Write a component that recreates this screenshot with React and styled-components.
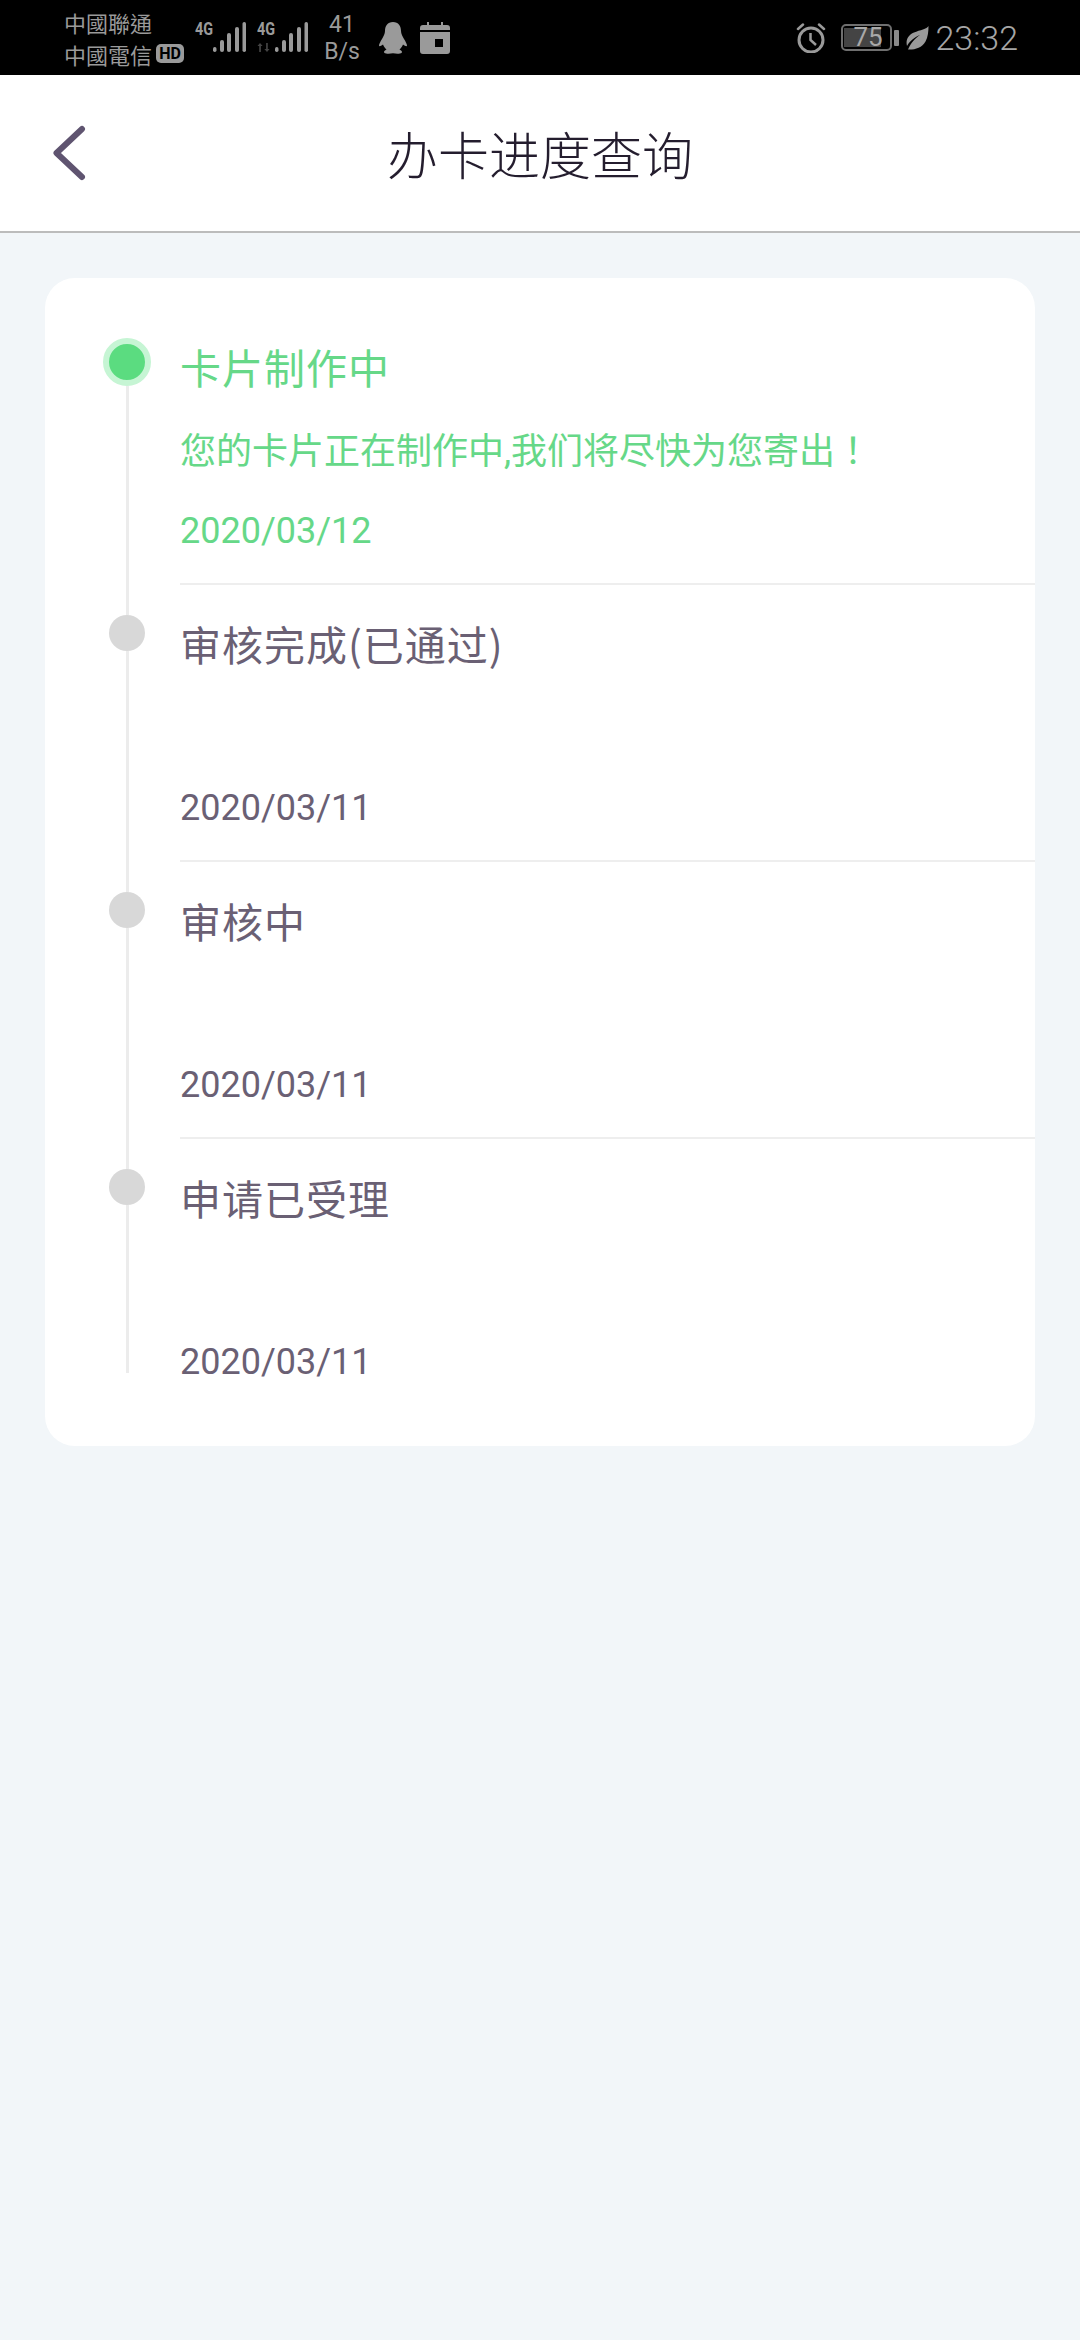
import styled, { createGlobalStyle } from 'styled-components';

const GlobalStyle = createGlobalStyle`
  * {
    box-sizing: border-box;
  }
  html,
  body {
    margin: 0;
    padding: 0;
    background: #f2f6f9;
  }
  body {
    font-family: Roboto, 'Noto Sans CJK SC', sans-serif;
  }
`;

const Page = styled.div`
  width: 1080px;
  height: 2340px;
  background: #f2f6f9;
  overflow: hidden;
`;

const StatusBar = styled.div`
  height: 75px;
  background: #000;
  color: #9a9a9a;
  display: flex;
  align-items: center;
  justify-content: space-between;
  padding: 0 62px 0 64px;
`;

const StatusGroup = styled.div`
  display: flex;
  align-items: center;
`;

const Carriers = styled.div`
  width: 131px;
  display: flex;
  flex-direction: column;
  font-family: 'Noto Sans CJK TC', sans-serif;
  font-size: 22px;
  line-height: 32px;
`;

const CarrierLine = styled.div`
  display: flex;
  align-items: center;
  white-space: nowrap;
`;

const HdBadge = styled.span`
  margin-left: 4px;
  width: 28px;
  height: 19px;
  border-radius: 5px;
  background: #9a9a9a;
  color: #000;
  font: 700 16px/19px Roboto, sans-serif;
  text-align: center;
`;

const Signals = styled.div`
  display: flex;
  gap: 10px;
`;

const Speed = styled.div`
  width: 36px;
  margin-left: 15px;
  font-size: 23px;
  line-height: 27px;
  text-align: center;
`;

const AppIcons = styled.div`
  display: flex;
  gap: 13px;
  margin-left: 19px;
`;

const Battery = styled.div`
  width: 51px;
  height: 27px;
  margin-left: 15px;
  padding: 2px 1px;
  border: 2px solid #6f6f6f;
  border-radius: 5px;
  display: flex;
`;

const BatteryLevel = styled.div`
  flex: 1;
  background: linear-gradient(#444, #444) no-repeat left / ${({ $fill }) => $fill}px 100%;
  color: #a8a8a8;
  font-size: 26px;
  line-height: 19px;
  padding-left: 9px;
`;

const BatteryCap = styled.div`
  width: 5px;
  height: 16px;
  margin-left: 2px;
  border-radius: 1px;
  background: #8a8a8a;
`;

const LeafSlot = styled.div`
  margin-left: 7px;
`;

const Clock = styled.div`
  margin-left: 6px;
  font-size: 34px;
  font-weight: 300;
  line-height: 40px;
  color: #a6a6a6;
`;

const Header = styled.div`
  height: 158px;
  background: #fff;
  border-bottom: 2px solid #bcbcbc;
  display: grid;
  grid-template-columns: 1fr auto 1fr;
  align-items: center;
  padding-left: 50px;
`;

const BackButton = styled.div`
  width: 36px;
  height: 60px;
`;

const Title = styled.div`
  margin-left: -50px;
  font-family: 'Noto Sans CJK SC', sans-serif;
  font-size: 51px;
  font-weight: 300;
  line-height: 60px;
  color: #241d2e;
`;

const Card = styled.div`
  margin: 45px 45px 0;
  height: 1168px;
  padding: 30px 0 31px 58px;
  background: #fff;
  border-radius: 30px;
`;

const Row = styled.div`
  height: 277px;
  display: flex;
  color: ${({ $active }) => ($active ? '#66d888' : '#6a6074')};
`;

const Marker = styled.div`
  width: 48px;
  display: flex;
  flex-direction: column;
  align-items: center;
  padding-bottom: ${({ $last }) => ($last ? '43px' : '0')};
`;

const RailTop = styled.div`
  width: 3px;
  height: 30px;
  margin-left: 1px;
  background: ${({ $active }) => ($active ? 'transparent' : '#ececec')};
`;

const Rail = styled.div`
  width: 3px;
  flex: 1;
  margin-left: 1px;
  background: #ececec;
`;

const Dot = styled.div`
  flex: none;
  width: ${({ $active }) => ($active ? '48px' : '36px')};
  height: ${({ $active }) => ($active ? '48px' : '36px')};
  border-radius: 50%;
  background: ${({ $active }) => ($active ? '#5bdc80' : '#d8d8d8')};
  border: ${({ $active }) => ($active ? '6px solid #c6f5d4' : 'none')};
`;

const Content = styled.div`
  flex: 1;
  margin-left: 29px;
  padding-top: 30px;
  border-bottom: ${({ $last }) => ($last ? 'none' : '2px solid #eeeeee')};
`;

const RowTitle = styled.div`
  height: 56px;
  font-family: 'Noto Sans CJK SC', sans-serif;
  font-size: 41px;
  font-weight: 400;
  line-height: 56px;
  letter-spacing: 1px;
`;

const Message = styled.div`
  height: 56px;
  margin-top: 26px;
  font-family: Roboto, 'Noto Sans CJK SC', sans-serif;
  font-size: 36px;
  font-weight: 400;
  line-height: 56px;
  white-space: nowrap;
`;

// the TC cut centres the full-width mark in its cell, as the reference does
const Bang = styled.span`
  font-family: 'Noto Sans CJK TC', sans-serif;
`;

const DateText = styled.div`
  height: 56px;
  margin-top: 27px;
  font-size: 36px;
  line-height: 56px;
`;

const SignalIcon = ({ roaming }) => (
  <svg width="52" height="42" viewBox="0 -4 52 42" fill="#9a9a9a" style={{ display: 'block' }}>
    <text x="0" y="14" fontFamily="Roboto" fontSize="18" fontWeight="700" transform="scale(0.8 1)">4G</text>
    {roaming && (
      <path d="M3 22l-2.500 3h1.700v6h1.700v-6h1.700zM10 31l2.500-3h-1.700v-6H9.100v6H7.400z" fill="#444" />
    )}
    <rect x="18" y="26" width="3.500" height="5" rx="1.700" />
    <rect x="25" y="19" width="4" height="12" rx="2" />
    <rect x="32" y="12" width="4" height="19" rx="2" />
    <rect x="40" y="6" width="4" height="25" rx="2" />
    <rect x="47.500" y="1" width="3.500" height="30" rx="1.700" />
  </svg>
);

const PenguinIcon = () => (
  <svg width="28" height="32" viewBox="0 0 28 32" fill="#9a9a9a" style={{ display: 'block' }}>
    <path d="M14 0C8.500 0 6 4 6 9c0 3-1.500 5-3 8-1.500 2.500-3 5-3 6.500 0 1 1.500 1 4-1 .8 2.200 2 3.800 3.500 5C5 28.800 4.500 30 5.500 31c1 .8 5 1 8.500.3 3.500.7 7.500.5 8.500-.3 1-1 .5-2.200-2-3.500 1.500-1.200 2.700-2.800 3.500-5 2.500 2 4 2 4 1 0-1.500-1.500-4-3-6.500-1.500-3-3-5-3-8 0-5-2.500-9-8-9z" />
  </svg>
);

const CalendarIcon = () => (
  <svg width="30" height="32" viewBox="0 0 30 32" style={{ display: 'block' }}>
    <path
      fill="#9a9a9a"
      fillRule="evenodd"
      d="M7 0h2v3h12V0h2v3h4a3 3 0 0 1 3 3v2H0V6a3 3 0 0 1 3-3h4zM0 10h30v19a3 3 0 0 1-3 3H3a3 3 0 0 1-3-3zM15 17v8h8v-8z"
    />
  </svg>
);

const AlarmIcon = () => (
  <svg width="30" height="30" viewBox="0 0 30 30" fill="none" stroke="#9a9a9a" style={{ display: 'block' }}>
    <circle cx="15" cy="17" r="12" strokeWidth="3" />
    <path d="M14.500 10v7l5.500 5" strokeWidth="2.500" />
    <path d="M2 6l5-4.500M28 6l-5-4.500" strokeWidth="2.500" strokeLinecap="round" />
  </svg>
);

const LeafIcon = () => (
  <svg width="23" height="24" viewBox="0 0 23 24" style={{ display: 'block' }}>
    <path
      fill="#9a9a9a"
      d="M22.500 0C21 3 14 4 8 6.500 2 9-.5 14 1 20 4 14.500 9 11 14 9 9 12.500 5 16.500 2 23.500 8 24 16 22 19.500 15.500 22 11 22.500 5 22.500 0z"
    />
  </svg>
);

const BackIcon = () => (
  <svg width="36" height="60" viewBox="0 0 36 60" fill="none" style={{ display: 'block' }}>
    <path d="M32 6L6.500 30 32 54" stroke="#5f5470" strokeWidth="6" strokeLinecap="round" strokeLinejoin="round" />
  </svg>
);

const steps = [
  {
    title: '卡片制作中',
    message: (
      <>
        您的卡片正在制作中,我们将尽快为您寄出<Bang>！</Bang>
      </>
    ),
    date: '2020/03/12',
    active: true,
  },
  { title: '审核完成(已通过)', date: '2020/03/11' },
  { title: '审核中', date: '2020/03/11' },
  { title: '申请已受理', date: '2020/03/11' },
];

const App = () => (
  <Page>
    <GlobalStyle />
    <StatusBar>
      <StatusGroup>
        <Carriers>
          <CarrierLine>中國聯通</CarrierLine>
          <CarrierLine>
            中國電信
            <HdBadge>HD</HdBadge>
          </CarrierLine>
        </Carriers>
        <Signals>
          <SignalIcon />
          <SignalIcon roaming />
        </Signals>
        <Speed>
          41
          <br />
          B/s
        </Speed>
        <AppIcons>
          <PenguinIcon />
          <CalendarIcon />
        </AppIcons>
      </StatusGroup>
      <StatusGroup>
        <AlarmIcon />
        <Battery>
          <BatteryLevel $fill={37}>75</BatteryLevel>
        </Battery>
        <BatteryCap />
        <LeafSlot>
          <LeafIcon />
        </LeafSlot>
        <Clock>23:32</Clock>
      </StatusGroup>
    </StatusBar>
    <Header>
      <BackButton>
        <BackIcon />
      </BackButton>
      <Title>办卡进度查询</Title>
    </Header>
    <Card>
      {steps.map((step, index) => {
        const last = index === steps.length - 1;
        return (
          <Row key={step.title} $active={step.active}>
            <Marker $last={last}>
              <RailTop $active={step.active} />
              <Dot $active={step.active} />
              <Rail />
            </Marker>
            <Content $last={last}>
              <RowTitle>{step.title}</RowTitle>
              <Message>{step.message}</Message>
              <DateText>{step.date}</DateText>
            </Content>
          </Row>
        );
      })}
    </Card>
  </Page>
);

export default App;
